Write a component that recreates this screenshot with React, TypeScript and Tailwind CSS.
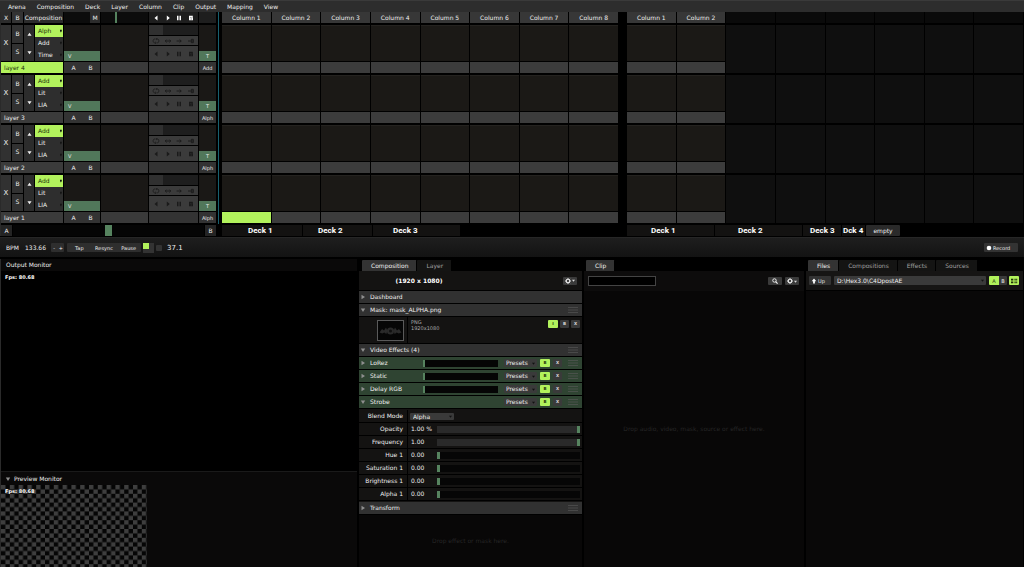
import { useState } from "react";
import type { ReactNode } from "react";

const MENUS = ["Arena", "Composition", "Deck", "Layer", "Column", "Clip", "Output", "Mapping", "View"];

const LAYERS = [
  { name: "layer 4", modes: ["Alph", "Add", "Time"], blend: "Add", selected: true },
  { name: "layer 3", modes: ["Add", "Lit", "LIA"], blend: "Alph", selected: false },
  { name: "layer 2", modes: ["Add", "Lit", "LIA"], blend: "Alph", selected: false },
  { name: "layer 1", modes: ["Add", "Lit", "LIA"], blend: "Alph", selected: false },
];

const PARAMS = [
  { name: "Opacity", value: "1.00 %", level: 100 },
  { name: "Frequency", value: "1.00", level: 100 },
  { name: "Hue 1", value: "0.00", level: 0 },
  { name: "Saturation 1", value: "0.00", level: 0 },
  { name: "Brightness 1", value: "0.00", level: 0 },
  { name: "Alpha 1", value: "0.00", level: 0 },
];

const center = "flex items-center justify-center";

function Slider({ label, level, className }: { label: string; level: number; className: string }) {
  const [value, setValue] = useState(level);
  return (
    <input
      type="range"
      aria-label={label}
      min={0}
      max={100}
      value={value}
      onChange={(e) => setValue(Number(e.target.value))}
      className={`block min-w-0 appearance-none [&::-webkit-slider-thumb]:appearance-none [&::-webkit-slider-thumb]:bg-[#56835f] ${className}`}
    />
  );
}

function Transport({ className }: { className: string }) {
  return (
    <div className={`grid grid-cols-4 items-center px-px ${className}`}>
      <button aria-label="Backwards" className={center}>
        <svg viewBox="0 0 6 6" className="size-[6px]" fill="currentColor"><path d="M4.5.5v5L1.500 3z" /></svg>
      </button>
      <button aria-label="Play" className={center}>
        <svg viewBox="0 0 6 6" className="size-[6px]" fill="currentColor"><path d="M1.800.5v5L4.800 3z" /></svg>
      </button>
      <button aria-label="Pause" className={center}>
        <svg viewBox="0 0 6 6" className="size-[6px]" fill="currentColor"><path d="M1 .8h1.500v4.400H1zM3.500.8H5v4.400H3.500z" /></svg>
      </button>
      <button aria-label="Random" className={center}>
        <svg viewBox="0 0 6 6" className="size-[6px]" fill="currentColor"><path fillRule="evenodd" d="M1 .8h3.800V3L5 3.200v2H1zM2.300 1.900v.6h1.200v-.6zM2.500 3.700v.5h1.500v-.5z" /></svg>
      </button>
    </div>
  );
}

function LoopRow() {
  return (
    <div className="grid h-[9px] grid-cols-4 items-center bg-[#3b3b3b] px-px text-[#1a1a1a]">
      <button aria-label="Loop" className={center}>
        <svg viewBox="0 0 8 6" className="h-[6px] w-[8px]" fill="none" stroke="currentColor" strokeWidth=".8"><path d="M3.500 1H2.600C.6 1 .6 4.800 2.600 4.800M4.500 4.800h1C7.400 4.800 7.400 1 5.500 1H5M4 0L5.200 1 4 2M4 3.800L2.800 4.800 4 5.800" /></svg>
      </button>
      <button aria-label="Bounce" className={center}>
        <svg viewBox="0 0 8 6" className="h-[6px] w-[8px]" fill="none" stroke="currentColor" strokeWidth=".9"><path d="M1.200 3h5.600M2.600 1.600L1.200 3l1.400 1.400M5.400 1.600L6.800 3 5.400 4.400" /></svg>
      </button>
      <button aria-label="Play once" className={center}>
        <svg viewBox="0 0 8 6" className="h-[6px] w-[8px]" fill="none" stroke="currentColor" strokeWidth=".9"><path d="M1.600 3h4.600M4.600 1.500L6.200 3 4.600 4.500" /></svg>
      </button>
      <button aria-label="Play and eject" className={center}>
        <svg viewBox="0 0 8 6" className="h-[6px] w-[8px]" fill="none" stroke="currentColor" strokeWidth=".9"><path d="M1 3h2.800M4.300 1.300h2v3.400h-2zM4.300 3h2" /></svg>
      </button>
    </div>
  );
}

function Layer({ layer }: { layer: (typeof LAYERS)[number] }) {
  const key = "bg-[#313131] hover:bg-[#3d3d3d]";
  return (
    <div className="grid h-[48px] grid-cols-[62px_36px_47px_49px_17px] grid-rows-[36px_11px] gap-px">
      <div className="grid grid-cols-[10px_11px_10px_1fr] gap-px">
        <button className={`${center} ${key} text-[7px]`}>X</button>
        <div className="grid grid-rows-2 gap-px">
          <button className={key}>B</button>
          <button className={key}>S</button>
        </div>
        <div className="grid grid-rows-2 bg-[#2c2c2c]">
          <button aria-label="Fade up" className={center}>
            <svg viewBox="0 0 6 6" className="size-[5px]" fill="#eee"><path d="M.5 4.500L3 1l2.500 3.500z" /></svg>
          </button>
          <button aria-label="Fade down" className={center}>
            <svg viewBox="0 0 6 6" className="size-[5px]" fill="#eee"><path d="M.5 1.500L3 5l2.500-3.500z" /></svg>
          </button>
        </div>
        <div className="grid grid-rows-3 bg-[#2e2e2e]">
          {layer.modes.map((mode, i) => (
            <button
              key={mode}
              className={`flex items-center justify-between pl-[3px] ${i === 0 ? "bg-[#b2f25c] text-[#20300c]" : ""}`}
            >
              {mode}
              <svg viewBox="0 0 4 6" className="h-[6px] w-[4px]" fill="#141414"><path d="M1 1.800h1.800v1.200L1.900 4.500 1 3z" /></svg>
            </button>
          ))}
        </div>
      </div>
      <div className="flex flex-col justify-end bg-[#1a1816]">
        <button className="flex h-[10px] items-center bg-[#51775a] pl-[4px] text-[5px]">V</button>
      </div>
      <div className="bg-[#1a1816]" />
      <div className="flex flex-col justify-between">
        <div className="h-[10px] bg-[#1e1e1e] pr-[35px]"><div className="h-full bg-[#303030]" /></div>
        <LoopRow />
        <Transport className="h-[15px] bg-[#3b3b3b] text-[#1a1a1a]" />
      </div>
      <div className="flex flex-col justify-end bg-[#1a1816]">
        <button className="h-[10px] bg-[#51775a] text-[5px]">T</button>
      </div>

      <button className={`pl-[3px] text-left ${layer.selected ? "bg-[#b2f25c] text-[#20300c]" : "bg-[#3b3b3b]"}`}>
        {layer.name}
      </button>
      <div className="grid grid-cols-2 bg-[#333] px-px">
        <button>A</button>
        <button>B</button>
      </div>
      <div className="bg-[#3a3a3a]" />
      <div className="bg-[#333]" />
      <button className="bg-[#333] text-[5px]">{layer.blend}</button>
    </div>
  );
}

function ClipGrid({ used, active, decks }: { used: number; active?: boolean; decks: ReactNode }) {
  const cols = Array.from({ length: 8 }, (_, i) => i);
  return (
    <section className="flex min-w-0 flex-1 flex-col gap-[2px]">
      <div className="grid h-[11px] grid-cols-8 gap-px">
        {cols.map((c) =>
          c < used ? (
            <button key={c} className="bg-[#373737]">Column {c + 1}</button>
          ) : (
            <div key={c} className="bg-[#0a0a0a]" />
          ),
        )}
      </div>
      {LAYERS.map((layer, r) => (
        <div key={layer.name} className="grid h-[48px] grid-cols-8 gap-px">
          {cols.map((c) =>
            c < used ? (
              <div key={c} className="grid grid-rows-[36px_11px] gap-px">
                <div className="border-t border-[#24221f] bg-[#1b1916]" />
                <div className={active && r === 3 && c === 0 ? "bg-[#b2f25c]" : "bg-[#3c3c3c]"} />
              </div>
            ) : (
              <div key={c} className="bg-[#0f0f0f]" />
            ),
          )}
        </div>
      ))}
      <div className="flex h-[11px]">{decks}</div>
    </section>
  );
}

function Deck({ name, className }: { name: string; className: string }) {
  return (
    <button
      className={`shrink-0 border-r border-black bg-[#131211] text-left font-[Roboto,sans-serif] text-[8px] font-bold text-white ${className}`}
    >
      {name}
    </button>
  );
}

function Tab({ children, on }: { children: ReactNode; on?: boolean }) {
  return (
    <button
      role="tab"
      aria-selected={!!on}
      className={`h-[11px] rounded-t-[1px] border-r border-black pr-[8px] pl-[9px] ${on ? "bg-[#333] text-[#f0f0f0]" : "bg-[#141413] text-[#a0a0a0]"}`}
    >
      {children}
    </button>
  );
}

function Grip() {
  return (
    <svg viewBox="0 0 10 6" className="h-[6px] w-[10px]" stroke="#5a5a5a" strokeWidth=".6" fill="none">
      <path d="M0 .5h10M0 3h10M0 5.500h10" />
    </svg>
  );
}

function Caret({ open }: { open?: boolean }) {
  return (
    <svg viewBox="0 0 6 6" className="size-[6px]" fill="#8f8f8f">
      {open ? <path d="M.8 1.500h4.400L3 5z" /> : <path d="M1.500.8v4.400L5 3z" />}
    </svg>
  );
}

function GearButton() {
  return (
    <button aria-label="Options" className={`${center} h-[8px] w-[14px] gap-px rounded-[1px] bg-[#3a3a3a]`}>
      <svg viewBox="0 0 8 8" className="size-[6px]" fill="none" stroke="#e6e6e6">
        <circle cx="4" cy="4" r="2.300" strokeWidth="1.500" />
        <path strokeWidth="1.300" d="M4 0v1.500M4 6.500V8M0 4h1.500M6.500 4H8M1.200 1.200l1 1M5.800 5.800l1 1M6.800 1.200l-1 1M2.200 5.800l-1 1" />
      </svg>
      <svg viewBox="0 0 4 4" className="size-[3px]" fill="#ddd"><path d="M0 1h4L2 3.500z" /></svg>
    </button>
  );
}

function SmallKey({ children, on }: { children: ReactNode; on?: boolean }) {
  return (
    <button className={`${center} h-[8px] rounded-[1px] text-[4px] font-bold ${on ? "w-[10px] bg-[#b2f25c] text-[#20300c]" : "w-[9px] bg-[#3a3a3a] text-[#ddd]"}`}>
      {children}
    </button>
  );
}

function Section({ title, open, grip }: { title: string; open?: boolean; grip?: boolean }) {
  return (
    <div className="flex h-[13px] items-center border-b border-black bg-[#313131] pr-[4px] pl-px">
      <button className="flex items-center gap-[4px]"><Caret open={open} />{title}</button>
      <span className="grow" />
      {grip && <Grip />}
    </div>
  );
}

function SelectBox({ label, value, className }: { label: string; value: string; className: string }) {
  return (
    <span className={`flex items-center rounded-[1px] bg-[#3a3a3a] pr-[2px] ${className}`}>
      <select aria-label={label} className="h-full w-full min-w-0 appearance-none bg-transparent p-0 leading-[8px] outline-none">
        <option>{value}</option>
      </select>
      <svg viewBox="0 0 4 4" className="size-[3px] shrink-0" fill="#111"><path d="M0 1h4L2 3.500z" /></svg>
    </span>
  );
}

function Effect({ name, open }: { name: string; open?: boolean }) {
  return (
    <div className="flex h-[13px] items-center border-b border-black bg-[#2f4432] pr-[4px] pl-px">
      <button className="flex w-[63px] items-center gap-[4px]"><Caret open={open} />{name}</button>
      {!open && (
        <Slider
          label={`${name} level`}
          level={0}
          className="h-[7px] w-[75px] bg-[#050505] [&::-webkit-slider-thumb]:h-[7px] [&::-webkit-slider-thumb]:w-[2px]"
        />
      )}
      <span className="grow" />
      <div className="flex items-center gap-[3px]">
        <SelectBox label={`${name} presets`} value="Presets" className="h-[8px] w-[33px] pl-[2px]" />
        <SmallKey on>B</SmallKey>
        <SmallKey>X</SmallKey>
      </div>
      <span className="w-[6px]" />
      <Grip />
    </div>
  );
}

function CompositionPanel() {
  return (
    <section className="flex min-w-0 flex-col">
      <div role="tablist" className="flex pt-px pl-[3px]"><Tab on>Composition</Tab><Tab>Layer</Tab></div>
      <div className="flex h-[20px] items-center border-b border-black bg-[#141312] pr-[5px]">
        <h2 className="grow pr-[84px] text-center text-[6px] font-bold text-white">(1920 x 1080)</h2>
        <GearButton />
      </div>
      <Section title="Dashboard" />
      <Section title="Mask: mask_ALPHA.png" open grip />
      <div className="flex h-[27px] border-b border-black bg-[#141312]">
        <div className="flex w-[49px] items-center justify-end border-r border-black pr-[3px]">
          <svg viewBox="0 0 27 21" className="h-[21px] w-[27px]">
            <rect x=".5" y=".5" width="26" height="20" fill="#060606" stroke="#5a5a5a" />
            <g fill="#2a2a2a">
              <circle cx="13.500" cy="11" r="3.600" />
              <path d="M2.500 12.500l2.500-3.500 2 1.500 2-3 1.500 3.500-1.200 3-2-1.500-2 1zM24.500 12.500L22 9l-2 1.500-2-3-1.500 3.500 1.200 3 2-1.500 2 1z" />
            </g>
            <circle cx="13.500" cy="11" r="1.500" fill="#101010" />
          </svg>
        </div>
        <div className="grow pt-[2px] pl-[3px] text-[5px] leading-[6px] text-[#aaa]">
          <p>PNG</p>
          <p>1920x1080</p>
        </div>
        <div className="flex gap-[2px] pt-[3px] pr-[2px]">
          <SmallKey on>I</SmallKey>
          <SmallKey>B</SmallKey>
          <SmallKey>X</SmallKey>
        </div>
      </div>
      <Section title="Video Effects (4)" open grip />
      <Effect name="LoRez" />
      <Effect name="Static" />
      <Effect name="Delay RGB" />
      <Effect name="Strobe" open />
      <div className="bg-[#141312] py-px">
        <div className="flex h-[13px] items-center border-b border-black">
          <span className="flex h-full w-[49px] items-center justify-end border-r border-black pr-[4px]">Blend Mode</span>
          <SelectBox label="Blend Mode" value="Alpha" className="ml-[2px] h-[7px] w-[44px] pl-[3px]" />
        </div>
        {PARAMS.map((p) => (
          <div key={p.name} className="flex h-[13px] items-center border-b border-black pr-[2px]">
            <span className="flex h-full w-[49px] shrink-0 items-center justify-end border-r border-black pr-[4px]">{p.name}</span>
            <span className="w-[29px] shrink-0 pl-[3px]">{p.value}</span>
            <Slider
              label={p.name}
              level={p.level}
              className={`h-[7px] grow [&::-webkit-slider-thumb]:h-[7px] [&::-webkit-slider-thumb]:w-[3px] ${p.level ? "bg-[#2a2a2a]" : "bg-[#060606]"}`}
            />
          </div>
        ))}
      </div>
      <Section title="Transform" grip />
      <div className={`${center} grow bg-[#080707] text-[#262626]`}>Drop effect or mask here.</div>
    </section>
  );
}

function Monitors() {
  return (
    <section className="flex min-w-0 flex-col bg-[#0a0909]">
      <h2 className="h-[12px] pt-[2px] pl-[5px] leading-[8px]">Output Monitor</h2>
      <div className="grow bg-black pt-[3px] pl-[4px] text-[5px] leading-[7px] font-bold text-white">Fps: 80.68</div>
      <div className="flex h-[14px] items-center border-t border-[#1a1a1a] pl-[4px]">
        <button className="flex items-center gap-[3px]"><Caret open />Preview Monitor</button>
      </div>
      <div className="grid h-[82px] w-[146px]">
        <svg className="col-start-1 row-start-1 h-[82px] w-[146px]">
          <defs>
            <pattern id="checker" width="8.800" height="8.800" patternUnits="userSpaceOnUse">
              <rect width="8.800" height="8.800" fill="#050505" />
              <path d="M0 0h4.400v4.400H0zM4.400 4.400h4.400v4.400H4.400z" fill="#3e3e3e" />
            </pattern>
          </defs>
          <rect width="100%" height="100%" fill="url(#checker)" />
        </svg>
        <span className="col-start-1 row-start-1 pt-[3px] pl-[4px] text-[5px] leading-[7px] font-bold text-white">Fps: 80.68</span>
      </div>
    </section>
  );
}

export default function App() {
  return (
    <main className="flex min-h-screen flex-col bg-black font-['DejaVu_Sans',sans-serif] text-[6px] leading-[8px] text-[#eee]">
      <nav className="flex h-[12px] items-center gap-[11px] border-t border-[#3a3a3a] bg-[#2d2d2d] pl-[8px]">
        {MENUS.map((m) => <button key={m}>{m}</button>)}
      </nav>

      <div className="flex border-l border-[#2a2a2a] pr-px">
        <section className="flex w-[215px] shrink-0 flex-col gap-[2px]">
          <div className="grid h-[11px] grid-cols-[62px_36px_47px_49px_17px] gap-px">
            <div className="grid grid-cols-[10px_11px_1fr] gap-px">
              <button className="bg-[#2c2c2c]">X</button>
              <button className="bg-[#333]">B</button>
              <button className="bg-[#2c2c2c]">Composition</button>
            </div>
            <div className="flex justify-end bg-[#0c0c0c]">
              <button className="w-[10px] bg-[#2c2c2c]">M</button>
            </div>
            <Slider label="Composition speed" level={30} className="h-[11px] w-full bg-[#0c0c0c] [&::-webkit-slider-thumb]:h-[11px] [&::-webkit-slider-thumb]:w-[2px]" />
            <Transport className="bg-[#1e1e1e] text-white" />
            <div className="bg-[#1e1e1e]" />
          </div>
          {LAYERS.map((l) => <Layer key={l.name} layer={l} />)}
          <div className="flex h-[11px] gap-px">
            <button className="w-[11px] bg-[#242424]">A</button>
            <Slider label="Crossfader" level={50} className="h-[11px] grow bg-[#050505] [&::-webkit-slider-thumb]:h-[11px] [&::-webkit-slider-thumb]:w-[7px]" />
            <button className="w-[11px] bg-[#242424]">B</button>
          </div>
        </section>
        <div className="mr-[3px] mb-[12px] ml-[2px] w-px bg-[#17606f]" />
        <div className="flex min-w-0 grow gap-[9px]">
          <ClipGrid
            used={8}
            active
            decks={
              <>
                <Deck name="Deck 1" className="w-[81px] pl-[26px]" />
                <Deck name="Deck 2" className="w-[70px] pl-[15px]" />
                <Deck name="Deck 3" className="w-[88px] pl-[20px]" />
              </>
            }
          />
          <ClipGrid
            used={2}
            decks={
              <>
                <Deck name="Deck 1" className="w-[88px] pl-[24px]" />
                <Deck name="Deck 2" className="w-[88px] pl-[23px]" />
                <Deck name="Deck 3" className="w-[39px] pl-[7px]" />
                <Deck name="Dck 4" className="w-[24px] pl-px" />
                <button className="w-[34px] rounded-[1px] bg-[#2a2a2a]">empty</button>
              </>
            }
          />
        </div>
      </div>

      <div className="mt-px flex h-[20px] items-center border-t border-[#262626] bg-linear-to-b from-[#1e1e1e] to-[#131313] pr-[6px] pl-[6px]">
        <span className="w-[19px]">BPM</span>
        <span className="w-[26px]">133.66</span>
        <div className="grid h-[9px] w-[13px] grid-cols-2 rounded-[1px] bg-[#2e2e2e] text-[5px]">
          <button>-</button>
          <button>+</button>
        </div>
        <div className="ml-[3px] grid h-[9px] w-[74px] grid-cols-3 rounded-[1px] bg-[#2e2e2e] text-[5px]">
          <button>Tap</button>
          <button>Resync</button>
          <button>Pause</button>
        </div>
        <button aria-label="Beat" className="ml-[2px] h-[10px] w-[11px] bg-[#333]"><span className="mb-[4px] block size-[6px] bg-[#b2f25c]" /></button>
        <button aria-label="Metronome" className="ml-[2px] size-[6px] rounded-[1px] bg-[#333]" />
        <span className="ml-[5px] text-[7px]">37.1</span>
        <span className="grow" />
        <button className="flex h-[9px] w-[34px] items-center gap-px rounded-[1px] bg-[#333] pl-[2px] text-[5px]">
          <svg viewBox="0 0 6 6" className="size-[6px]" fill="#fff"><circle cx="3" cy="3" r="2.300" /></svg>
          Record
        </button>
      </div>

      <div className="mt-[2px] grid grow grid-cols-[356fr_223fr_220fr_217fr] gap-x-[2px] border-l border-[#2a2a2a] pr-px">
        <Monitors />
        <CompositionPanel />
        <section className="flex min-w-0 flex-col">
          <div role="tablist" className="flex pt-px pl-[2px]"><Tab on>Clip</Tab></div>
          <div className="flex h-[20px] items-center gap-[3px] bg-[#0d0c0c] pr-[5px] pl-[4px]">
            <input aria-label="Clip name" className="h-[10px] w-[68px] border border-[#444] bg-black px-[2px] outline-none" />
            <span className="grow" />
            <button aria-label="Search" className={`${center} h-[8px] w-[14px] rounded-[1px] bg-[#3a3a3a]`}>
              <svg viewBox="0 0 8 8" className="size-[6px]" fill="none" stroke="#eee"><circle cx="3.300" cy="3.300" r="2.300" strokeWidth="1.300" /><path strokeWidth="1.600" d="M5 5l2.500 2.500" /></svg>
            </button>
            <GearButton />
          </div>
          <div className={`${center} grow bg-[#080707] text-[#262626]`}>Drop audio, video, mask, source or effect here.</div>
        </section>
        <section className="flex min-w-0 flex-col">
          <div role="tablist" className="flex pt-px pl-[2px]">
            <Tab on>Files</Tab>
            <Tab>Compositions</Tab>
            <Tab>Effects</Tab>
            <Tab>Sources</Tab>
          </div>
          <div className="flex h-[20px] items-center border-b border-black bg-[#161514] pr-[4px] pl-[3px]">
            <button className="flex h-[9px] w-[22px] items-center gap-px rounded-[1px] bg-[#333] pl-[2px] text-[5px]">
              <svg viewBox="0 0 6 6" className="size-[6px]" fill="#fff"><path d="M3 .5L5.300 3.200H3.900v2.300H2.100V3.200H.7z" /></svg>
              Up
            </button>
            <SelectBox label="Folder" value="D:\Hex3.0\C4DpostAE" className="mr-[3px] ml-[3px] h-[9px] grow pl-[3px]" />
            <button className="h-[9px] w-[10px] rounded-l-[1px] bg-[#b2f25c] text-[5px] text-[#20300c]">A</button>
            <button className="h-[9px] w-[8px] rounded-r-[1px] bg-[#3a3a3a] text-[5px]">B</button>
            <button aria-label="Thumbnails" className={`${center} ml-[2px] h-[9px] w-[10px] rounded-[1px] bg-[#b2f25c]`}>
              <svg viewBox="0 0 8 6" className="h-[6px] w-[8px]" fill="#20300c"><path d="M1 .7h2.300v1.800H1zM1 3.500h2.300v1.800H1zM4.500.7h1.200v1.800H4.500zM6.200.7h1v1.800h-1zM4.500 3.500h1.200v1.800H4.500zM6.200 3.500h1v1.800h-1z" /></svg>
            </button>
          </div>
          <div className="grow bg-[#090808]" />
        </section>
      </div>
    </main>
  );
}
